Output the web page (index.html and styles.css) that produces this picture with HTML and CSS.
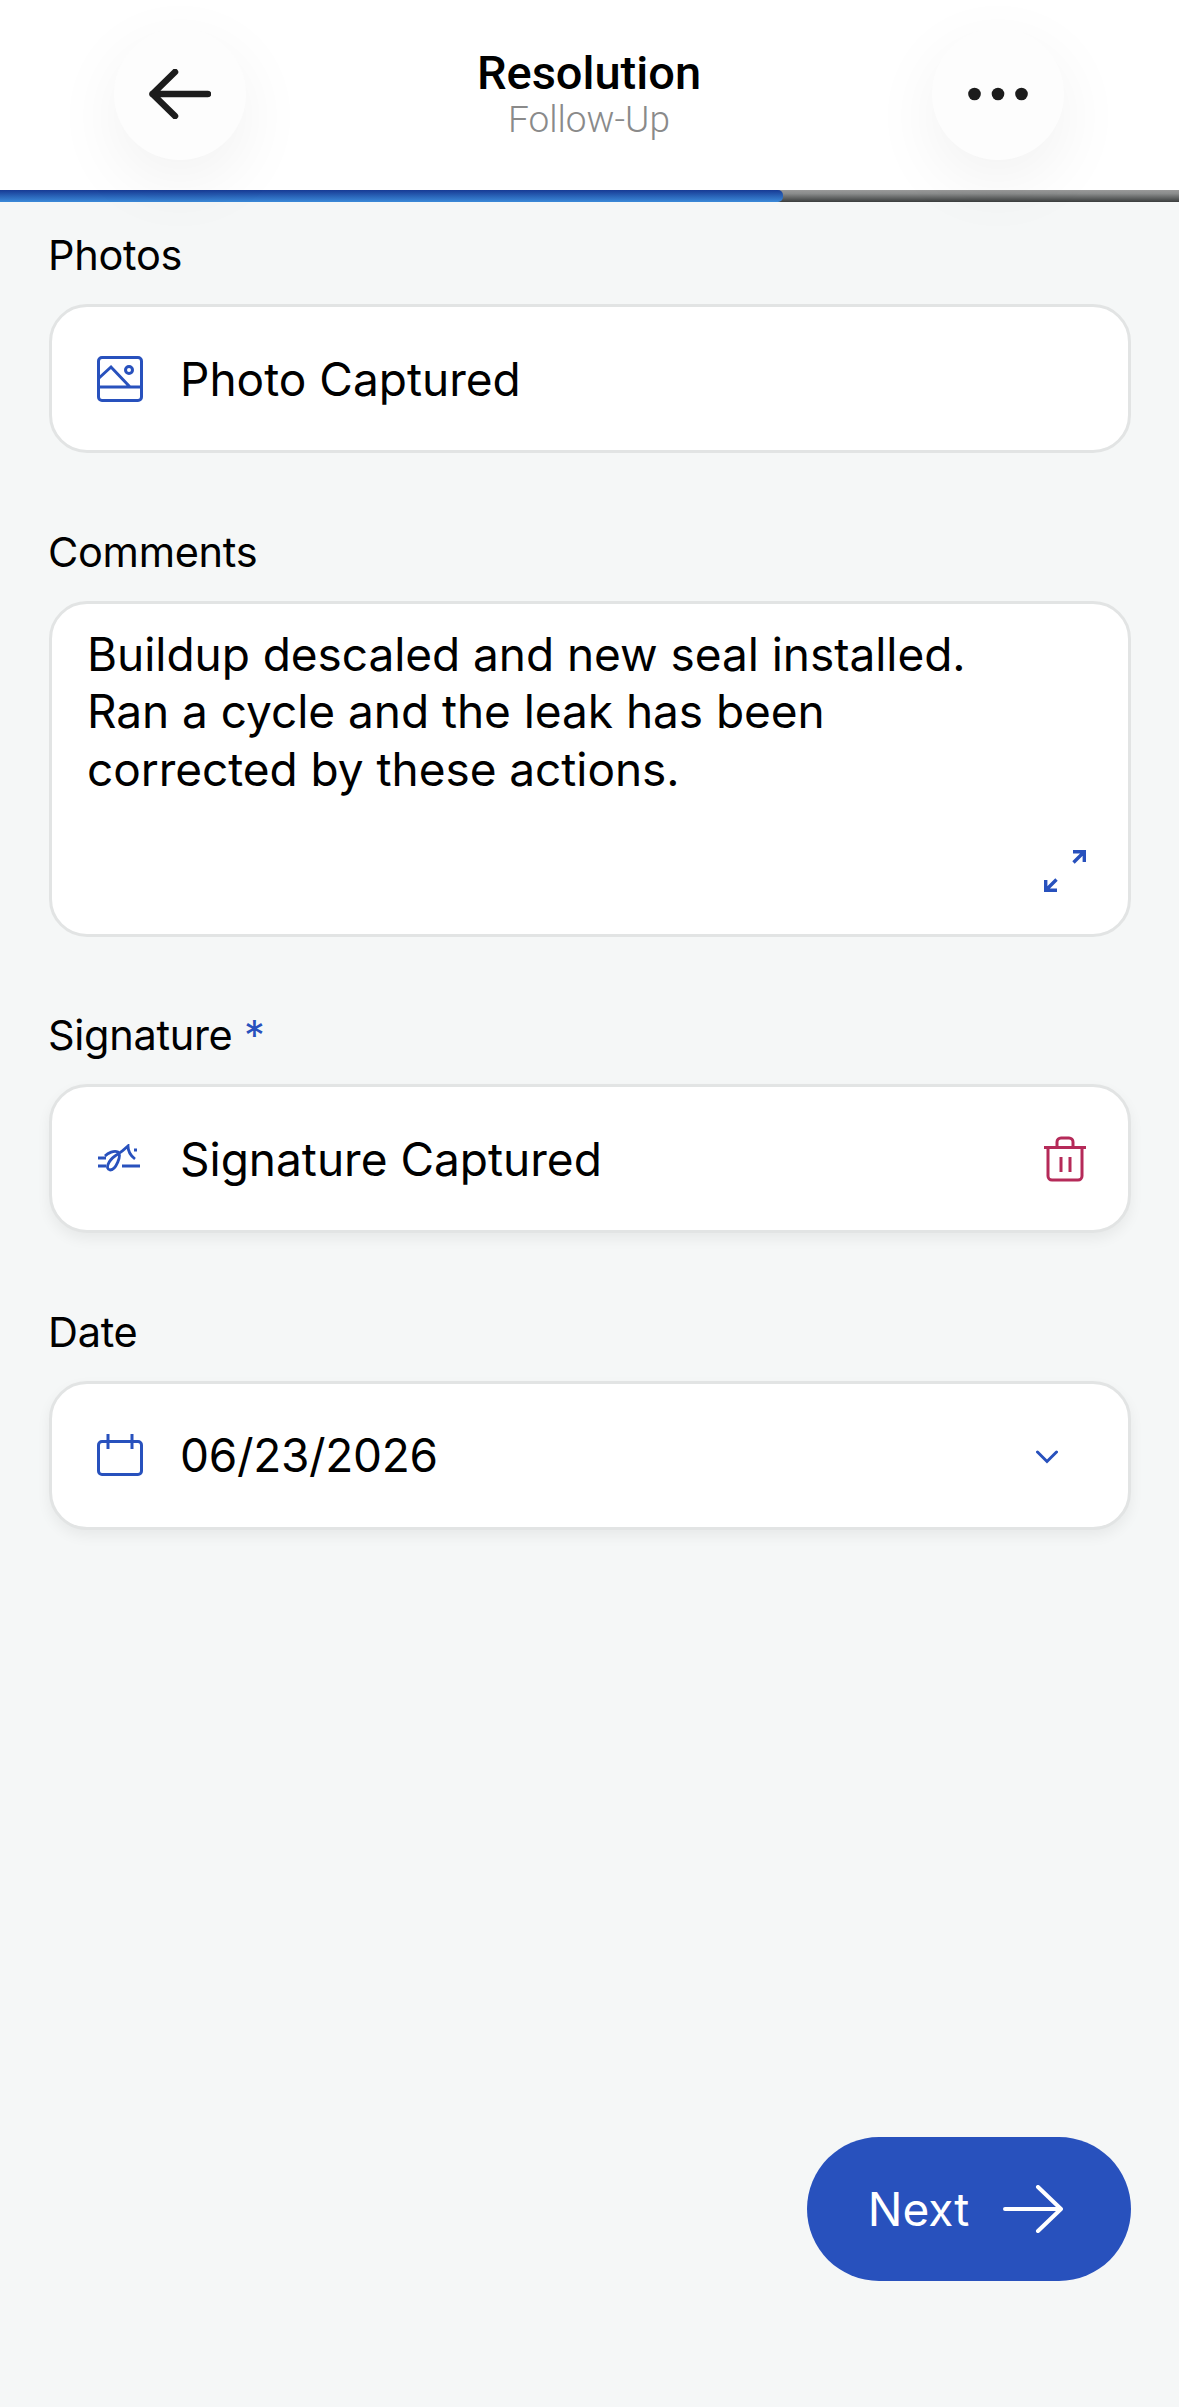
FILE: index.html
```html
<!DOCTYPE html>
<html lang="en">
<head>
  <meta charset="utf-8">
  <title>Resolution</title>
  <link rel="stylesheet" href="styles.css">
</head>
<body>
  <div class="page">
    <div class="top">
      <div class="round back">
        <svg width="62" height="50" viewBox="0 0 62 50"><path d="M59 25H3.5M26 3L3.5 25L26 47" fill="none" stroke="#1c1c1c" stroke-width="6.5" stroke-linecap="round" stroke-linejoin="round"/></svg>
      </div>
      <div class="heading">
        <div class="title">Resolution</div>
        <div class="sub">Follow-Up</div>
      </div>
      <div class="round more">
        <svg width="60" height="14" viewBox="0 0 60 14"><circle cx="6.5" cy="7" r="6.3" fill="#1c1c1c"/><circle cx="30" cy="7" r="6.3" fill="#1c1c1c"/><circle cx="53.5" cy="7" r="6.3" fill="#1c1c1c"/></svg>
      </div>
    </div>
    <div class="progress"><div class="progress-fill"></div></div>

    <div class="form">
      <div class="label">Photos</div>
      <div class="field">
        <svg class="icon" width="46" height="46" viewBox="0 0 46 46" fill="none" stroke="#2851bd" stroke-width="3"><rect x="1.5" y="1.5" width="43" height="43" rx="3.5"/><path d="M2 31H44M2 22L14 11L33 31"/><circle cx="32" cy="14" r="3.5"/></svg>
        <span class="value">Photo Captured</span>
      </div>

      <div class="label">Comments</div>
      <div class="field area">
        <div class="area-text">Buildup descaled and new seal installed.<br>Ran a cycle and the leak has been<br>corrected by these actions.</div>
        <svg class="expand" width="42" height="42" viewBox="0 0 42 42" fill="none" stroke="#2851bd" stroke-width="3.4"><path d="M29 1.7H40.3V12M40 2L29.5 12.5M1.7 30V40.3H13M2 40L12.5 29.5"/></svg>
      </div>

      <div class="label">Signature <span class="star">*</span></div>
      <div class="field raised">
        <svg class="icon" width="46" height="30" viewBox="0 0 46 30" fill="none" stroke="#2851bd" stroke-width="2.8"><path d="M1 14H9M1 22H9M25 22H43M8 12C11 9 17 6 21 8C25 11 19 26 13 26C8 25 11 17 18 12C23 9 28 5 31 2C31 8 34 12 38 15M37 6H40"/></svg>
        <span class="value">Signature Captured</span>
        <svg class="end" width="42" height="46" viewBox="0 0 42 46" fill="none" stroke="#b52a59" stroke-width="3"><path d="M0 11.5H42M4 11.5V40a4 4 0 0 0 4 4H34a4 4 0 0 0 4-4V11.5M13 11V6a4 4 0 0 1 4-4H25a4 4 0 0 1 4 4V11M17 21V36M26 21V36"/></svg>
      </div>

      <div class="label">Date</div>
      <div class="field raised">
        <svg class="icon" width="46" height="42" viewBox="0 0 46 42" fill="none" stroke="#2851bd" stroke-width="3"><rect x="1.5" y="7.5" width="43" height="33" rx="3.5"/><path d="M11 0V15M35 0V15"/></svg>
        <span class="value date">06/23/2026</span>
        <svg class="chev" width="22" height="14" viewBox="0 0 22 14" fill="none" stroke="#2851bd" stroke-width="3" stroke-linecap="round"><path d="M1.5 2L11 11.5L20.5 2"/></svg>
      </div>
    </div>

    <div class="bottom">
      <div class="next">
        <span>Next</span>
        <svg width="60" height="48" viewBox="0 0 60 48" fill="none" stroke="#fff" stroke-width="4" stroke-linecap="round" stroke-linejoin="round"><path d="M2 24H58M35 2L58 24L35 46"/></svg>
      </div>
    </div>
  </div>
</body>
</html>
```

FILE: styles.css
```css
html, body {
  margin: 0;
  padding: 0;
}
body {
  font-family: Inter, "Liberation Sans", sans-serif;
  background: #f5f7f7;
  color: #000;
}
.page {
  width: 1179px;
  height: 2407px;
  display: flex;
  flex-direction: column;
}

/* top bar */
.top {
  height: 190px;
  background: #fff;
  display: flex;
  align-items: flex-start;
  justify-content: space-between;
  padding: 28px 115px 0 114px;
  box-sizing: border-box;
  position: relative;
}
.round {
  width: 132px;
  height: 132px;
  background: #fdfdfd;
  border-radius: 50%;
  box-shadow: 0 22px 70px rgba(0, 0, 0, .06);
  display: flex;
  align-items: center;
  justify-content: center;
  position: relative;
  z-index: 2;
}
.heading {
  text-align: center;
  padding-top: 20px;
}
.title {
  font-family: Roboto, sans-serif;
  font-weight: 500;
  font-size: 47px;
  line-height: 50px;
}
.sub {
  font-family: Roboto, sans-serif;
  font-weight: 300;
  font-size: 37px;
  line-height: 43px;
  color: #8a8a8a;
}

.progress {
  height: 12px;
  background: linear-gradient(#999, #8a8c8c 30%, #3a3d3d);
  position: relative;
  z-index: 1;
}
.progress-fill {
  width: 783px;
  height: 100%;
  background: linear-gradient(#173a94, #3b8ad9);
  border-radius: 0 5px 5px 0;
}

/* form */
.form {
  flex: 1;
  padding: 29px 48px 0 49px;
  position: relative;
  z-index: 3;
}
.label {
  font-size: 41.5px;
  line-height: 48px;
  height: 73px;
  margin-left: -1px;
  font-weight: 400;
  letter-spacing: -.3px;
}
.star {
  color: #2851bd;
}
.field {
  height: 149px;
  box-sizing: border-box;
  background: #fff;
  border: 3px solid #e2e4e4;
  border-radius: 38px;
  display: flex;
  align-items: center;
  padding: 0 42px 0 45px;
  margin-bottom: 74.5px;
}
.raised {
  box-shadow: 0 6px 14px rgba(0, 0, 0, .06);
}
.icon {
  flex: none;
  margin-right: 37px;
}
.value {
  font-size: 46px;
  flex: 1;
}
.date {
  letter-spacing: -.3px;
}
.area {
  height: 336px;
  padding: 22px 36px 30px 35px;
  position: relative;
  align-items: flex-start;
}
.area-text {
  font-size: 46px;
  line-height: 57.5px;
  letter-spacing: -.05px;
}
.expand {
  position: absolute;
  right: 42px;
  bottom: 42px;
}
.end {
  flex: none;
}
.chev {
  flex: none;
  margin: 4px 28px 0 0;
}

/* next button */
.bottom {
  display: flex;
  justify-content: flex-end;
  padding: 0 48px 126px 0;
}
.next {
  width: 324px;
  height: 144px;
  box-sizing: border-box;
  padding-right: 7px;
  background: #2851bd;
  border-radius: 72px;
  color: #fff;
  font-size: 46px;
  display: flex;
  align-items: center;
  justify-content: center;
  gap: 34px;
}
```
